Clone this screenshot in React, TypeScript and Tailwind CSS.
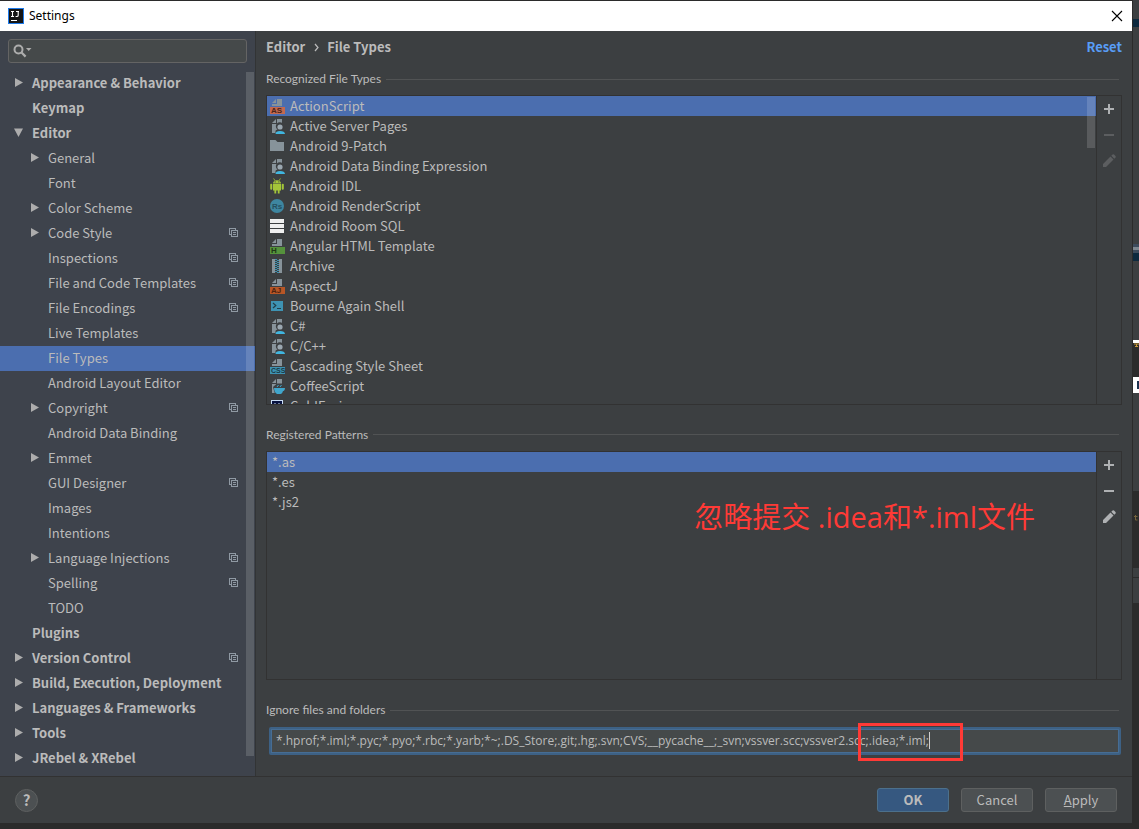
import type { ReactNode } from "react";

type Node = { label: string; level: 0 | 1; arrow?: "right" | "down"; copy?: boolean; selected?: boolean };

const tree: Node[] = [
  { label: "Appearance & Behavior", level: 0, arrow: "right" },
  { label: "Keymap", level: 0 },
  { label: "Editor", level: 0, arrow: "down" },
  { label: "General", level: 1, arrow: "right" },
  { label: "Font", level: 1 },
  { label: "Color Scheme", level: 1, arrow: "right" },
  { label: "Code Style", level: 1, arrow: "right", copy: true },
  { label: "Inspections", level: 1, copy: true },
  { label: "File and Code Templates", level: 1, copy: true },
  { label: "File Encodings", level: 1, copy: true },
  { label: "Live Templates", level: 1 },
  { label: "File Types", level: 1, selected: true },
  { label: "Android Layout Editor", level: 1 },
  { label: "Copyright", level: 1, arrow: "right", copy: true },
  { label: "Android Data Binding", level: 1 },
  { label: "Emmet", level: 1, arrow: "right" },
  { label: "GUI Designer", level: 1, copy: true },
  { label: "Images", level: 1 },
  { label: "Intentions", level: 1 },
  { label: "Language Injections", level: 1, arrow: "right", copy: true },
  { label: "Spelling", level: 1, copy: true },
  { label: "TODO", level: 1 },
  { label: "Plugins", level: 0 },
  { label: "Version Control", level: 0, arrow: "right", copy: true },
  { label: "Build, Execution, Deployment", level: 0, arrow: "right" },
  { label: "Languages & Frameworks", level: 0, arrow: "right" },
  { label: "Tools", level: 0, arrow: "right" },
  { label: "JRebel & XRebel", level: 0, arrow: "right" },
];

function Arrow({ dir }: { dir?: "right" | "down" }) {
  return (
    <svg width="9" height="9" viewBox="0 0 9 9" className="shrink-0" fill="#adadad" aria-hidden="true">
      {dir === "right" && <path d="M1 0L9 4.5L1 9Z" />}
      {dir === "down" && <path d="M0 0.5H9L4.5 9Z" />}
    </svg>
  );
}

function CopyIcon() {
  return (
    <svg width="9" height="9" viewBox="0 0 9 9" fill="none" stroke="#8f99a3" shapeRendering="crispEdges" className="shrink-0" aria-hidden="true">
      <path d="M2 6.5H0.5V0.5H6.5V2" />
      <rect x="2.5" y="2.5" width="6" height="6" />
      <path d="M4 4.5H7M4 6.5H7" />
    </svg>
  );
}

function Icon({ children }: { children: ReactNode }) {
  return (
    <svg width="16" height="16" viewBox="0 0 16 16" className="shrink-0" aria-hidden="true">
      {children}
    </svg>
  );
}

function Page() {
  return (
    <>
      <path d="M7 1L3 5H7Z" fill="#87939a" />
      <path d="M8 1H13V15H3V6H8Z" fill="#87939a" />
    </>
  );
}

function Badge({ text, color, back, ink, size = 8 }: { text: string; color: string; back: string; ink: string; size?: number }) {
  return (
    <Icon>
      <Page />
      <rect x="0" y="8" width="16" height="8" fill={back} />
      <rect x="1" y="9" width="15" height="7" fill={color} />
      <text x="2" y="15.4" fontSize={size} fontFamily="Liberation Sans, sans-serif" fontWeight="700" fill={ink}>
        {text}
      </text>
    </Icon>
  );
}

function UserFile() {
  return (
    <Icon>
      <Page />
      <path d="M5 16C5 13 7 12 8.5 11.6A4 4 0 1 1 13 11.6C15 12 16 13 16 16Z" fill="#3c3f41" />
      <path d="M3 6H6.5V15H3Z" fill="#87939a" />
      <circle cx="11" cy="9" r="2.6" fill="#9aa7b0" />
      <path d="M6.5 16C6.5 14 8 13 11 13S16 14 16 16Z" fill="#40b6e0" />
    </Icon>
  );
}

const files: { label: string; icon: ReactNode }[] = [
  { label: "ActionScript", icon: <Badge text="AS" color="#c4694f" back="#4b6eaf" ink="#4a2519" /> },
  { label: "Active Server Pages", icon: <UserFile /> },
  {
    label: "Android 9-Patch",
    icon: (
      <Icon>
        <path d="M1 2H6.5L8.5 4H15V13H1Z" fill="#87939a" />
      </Icon>
    ),
  },
  { label: "Android Data Binding Expression", icon: <UserFile /> },
  {
    label: "Android IDL",
    icon: (
      <Icon>
        <g fill="#a4c639">
          <path d="M4 5.5C4 3.5 5.5 2.2 8 2.2S12 3.5 12 5.5Z" />
          <path d="M4.6 0.4L6 2.8M11.4 0.4L10 2.8" stroke="#a4c639" strokeWidth="0.8" />
          <path d="M4 6H12V12.4H10.6V15.5H8.8V12.4H7.2V15.5H5.4V12.4H4Z" />
          <rect x="1.2" y="5.8" width="2.1" height="6" rx="1" />
          <rect x="12.7" y="5.8" width="2.1" height="6" rx="1" />
        </g>
        <rect x="5.7" y="3.4" width="1" height="1" fill="#3c3f41" />
        <rect x="9.3" y="3.4" width="1" height="1" fill="#3c3f41" />
      </Icon>
    ),
  },
  {
    label: "Android RenderScript",
    icon: (
      <Icon>
        <circle cx="8" cy="8" r="7" fill="#3e86a0" />
        <text x="3" y="11" fontSize="8" fontFamily="Liberation Sans, sans-serif" fontWeight="700" fill="#25505f">
          Rs
        </text>
      </Icon>
    ),
  },
  {
    label: "Android Room SQL",
    icon: (
      <Icon>
        <path d="M1 1H15V5H1ZM1 6H15V10H1ZM1 11H15V15H1Z" fill="#efefef" />
      </Icon>
    ),
  },
  { label: "Angular HTML Template", icon: <Badge text="H" color="#55923c" back="#3c3f41" ink="#1f3716" /> },
  {
    label: "Archive",
    icon: (
      <Icon>
        <path d="M3 1H6V15H3ZM10 1H13V15H10Z" fill="#87939a" />
        <path d="M7 1V15" stroke="#40b6e0" strokeWidth="1.4" strokeDasharray="1 1" />
        <path d="M9 2V15" stroke="#40b6e0" strokeWidth="1.4" strokeDasharray="1 1" />
      </Icon>
    ),
  },
  { label: "AspectJ", icon: <Badge text="AJ" color="#b85626" back="#3c3f41" ink="#4d2410" /> },
  {
    label: "Bourne Again Shell",
    icon: (
      <Icon>
        <rect x="2" y="3" width="12" height="10" fill="#3e93b3" />
        <path d="M4 5L6.8 7.5L4 10" fill="none" stroke="#223f4b" strokeWidth="1.2" />
        <path d="M8 10.5H12" stroke="#223f4b" />
      </Icon>
    ),
  },
  { label: "C#", icon: <UserFile /> },
  { label: "C/C++", icon: <UserFile /> },
  { label: "Cascading Style Sheet", icon: <Badge text="CSS" color="#3e93b3" back="#3c3f41" ink="#193945" size={7} /> },
  {
    label: "CoffeeScript",
    icon: (
      <Icon>
        <Page />
        <path d="M4 9L8 5.5H15V16H6Z" fill="#3c3f41" />
        <path d="M5 10H16C16 12.5 14.5 13 14 13C13.5 15 12.5 16 11.5 16H8C6 15 5 12.5 5 10Z" fill="#40a6cc" />
        <path d="M8 9L9.5 7M11 9L12.5 7" stroke="#40a6cc" />
      </Icon>
    ),
  },
  {
    label: "ColdFusion",
    icon: (
      <Icon>
        <rect x="2.5" y="2.5" width="11" height="11" fill="#07123f" stroke="#c9dcf5" />
        <path d="M7 6H5V10H7M11 6H9V10M9 8H11" fill="none" stroke="#c9dcf5" />
      </Icon>
    ),
  },
];

const patterns = ["*.as", "*.es", "*.js2"];

const uiFont = 'font-["Noto_Sans_CJK_SC",sans-serif]';
const smallFont = 'font-["Lato",sans-serif]';

function Section({ id, children, first = false }: { id: string; children: ReactNode; first?: boolean }) {
  return (
    <div className={`${smallFont} flex h-8 shrink-0 items-center gap-[5px] pr-[3px] text-[12px] ${first ? "" : "mt-[14px]"}`}>
      <label id={id} htmlFor={id === "ignore" ? "ignore-input" : undefined}>
        {children}
      </label>
      <div className="h-px flex-1 bg-[#515354]" />
    </div>
  );
}

function Tools({ editable }: { editable: boolean }) {
  const dim = editable ? "text-[#afb1b3]" : "text-[#5c5e60]";
  return (
    <div className="flex w-[25px] shrink-0 flex-col items-center gap-[10px] border-l border-[#323232] pt-[5px]">
      <button aria-label="Add" className="text-[#afb1b3]">
        <Icon>
          <path d="M7 3H9V7H13V9H9V13H7V9H3V7H7Z" fill="currentColor" />
        </Icon>
      </button>
      <button aria-label="Remove" className={dim}>
        <Icon>
          <path d="M3 7H13V9H3Z" fill="currentColor" />
        </Icon>
      </button>
      <button aria-label="Edit" className={dim}>
        <Icon>
          <path d="M2 14V11L9.5 3.5L12.5 6.5L5 14ZM10.3 2.7L11.6 1.4Q12.3 1 13 1.5L14.5 3Q15 3.7 14.6 4.4L13.3 5.7Z" fill="currentColor" />
        </Icon>
      </button>
    </div>
  );
}

function EditorEdge() {
  return (
    <div className="flex w-[7px] shrink-0 flex-col overflow-hidden border-l border-[#2b2b2b] bg-[#2b2b2b]" aria-hidden="true">
      <div className="h-[19px] shrink-0 bg-[#3c3f41]" />
      <div className="h-2 shrink-0 bg-[#0d293e]" />
      <div className="h-[217px] shrink-0 bg-[#3c3f41]" />
      <div className="flex h-[9px] shrink-0 items-center bg-[#3d4b5c]">
        <div className="h-[3px] w-full bg-[#7d8790]" />
      </div>
      <div className="h-2 shrink-0 bg-[#0d293e]" />
      <div className="h-[79px] shrink-0 bg-[#3c3f41]" />
      <div className="h-[3px] shrink-0 bg-white" />
      <svg width="6" height="34" viewBox="0 0 6 34" className="shrink-0">
        <path d="M1 1H6M3.5 1V4M2 3.5H5" stroke="#c99a3a" />
      </svg>
      <svg width="6" height="16" viewBox="0 0 6 16" className="shrink-0">
        <rect width="6" height="16" fill="#fff" />
        <rect x="4" y="4" width="2" height="8" fill="#1d3350" />
      </svg>
      <div className="h-[98px] shrink-0 bg-[#3c3f41]" />
      <svg width="6" height="77" viewBox="0 0 6 77" className="shrink-0">
        <path d="M2.5 24V29H4.5M1 25.5H4.5" stroke="#76643c" fill="none" />
      </svg>
      <div className="h-[9px] shrink-0 bg-[#3c3f41]" />
      <div className="mt-px h-[25px] shrink-0 bg-[#3c3f41]" />
    </div>
  );
}

export default function App() {
  return (
    <div className={`${uiFont} flex h-screen overflow-hidden bg-[#2b2b2b] text-[13px] leading-5 text-[#bbbbbb]`}>
      <div className="flex min-w-0 flex-1 flex-col pt-px pb-[6px]">
        <header className="flex h-[30px] shrink-0 items-center justify-between bg-white pr-2 pl-2 text-black">
          <div className="flex items-center gap-[5px]">
            <svg width="16" height="16" viewBox="0 0 16 16" aria-hidden="true">
              <rect x="0.5" y="0.5" width="15" height="15" fill="#151515" stroke="#1f7bea" />
              <path d="M3 3.5H6M4.5 3.5V8.5M3 8.5H6M8 3.5H11M10.2 3.5V7.2Q10.2 8.5 8.8 8.5H7.6" fill="none" stroke="#fff" strokeWidth="1.1" />
              <path d="M3 12.5H9" stroke="#fff" />
            </svg>
            <h1 className='font-["Noto_Sans",sans-serif] text-[12px]'>Settings</h1>
          </div>
          <button aria-label="Close">
            <svg width="14" height="14" viewBox="0 0 14 14" stroke="#000" strokeWidth="1.1">
              <path d="M2 2L12 12M12 2L2 12" />
            </svg>
          </button>
        </header>

        <div className="flex min-h-0 flex-1">
          <nav className="flex w-[256px] shrink-0 flex-col border-r border-[#323435] bg-[#3e434c]">
            <div className="mx-2 mt-2 flex h-6 shrink-0 items-center rounded-[3px] border border-[#646464] bg-[#45494a] pl-1">
              <svg width="19" height="14" viewBox="0 0 19 14" aria-hidden="true">
                <circle cx="5.5" cy="5.5" r="4" fill="none" stroke="#adadad" strokeWidth="2" />
                <path d="M8.3 8.3L12.6 12.6" stroke="#adadad" strokeWidth="2.2" />
                <path d="M13 4H18.5L15.7 7Z" fill="#adadad" />
              </svg>
              <input aria-label="Search settings" className="min-w-0 flex-1 bg-transparent outline-none" />
            </div>
            <div className="relative mt-2 min-h-0 flex-1 overflow-hidden">
              <ul>
                {tree.map((n) => (
                  <li key={n.label}>
                    <button
                      className={`flex h-[25px] w-full items-center gap-[9px] pr-[17px] pb-[2px] text-left ${n.level ? "pl-[30px]" : "pl-[14px] font-bold"} ${n.selected ? "bg-[#4b6eaf]" : ""}`}
                    >
                      <Arrow dir={n.arrow} />
                      <span className="flex-1 whitespace-nowrap">{n.label}</span>
                      {n.copy && <CopyIcon />}
                    </button>
                  </li>
                ))}
              </ul>
              <div className="absolute top-px right-px bottom-5 w-2 bg-white/15" />
            </div>
          </nav>

          <main className="flex min-w-0 flex-1 flex-col bg-[#3c3f41] pr-[10px] pl-[10px]">
            <div className="flex h-8 shrink-0 items-center justify-between font-bold">
              <div className="flex items-center">
                <span>Editor</span>
                <svg width="22" height="9" viewBox="0 0 22 9" fill="none" stroke="#bbbbbb" strokeWidth="1.2" aria-hidden="true">
                  <path d="M10 1L13 4.5L10 8" />
                </svg>
                <span>File Types</span>
              </div>
              <a href="#reset" className="text-[#589df6]">
                Reset
              </a>
            </div>

            <Section id="types" first>
              Recognized File Types
            </Section>
            <div className="flex min-h-0 flex-[310] basis-0 border border-[#323232]">
              <div className="relative min-w-0 flex-1 overflow-hidden">
                <ul aria-labelledby="types">
                  {files.map((f, i) => (
                    <li key={f.label}>
                      <button className={`flex h-5 w-full items-center gap-[5px] pl-[2px] text-left ${i === 0 ? "bg-[#4b6eaf]" : ""}`}>
                        {f.icon}
                        <span>{f.label}</span>
                      </button>
                    </li>
                  ))}
                </ul>
                <div className="absolute top-px right-px h-[51px] w-2 bg-white/15" />
              </div>
              <Tools editable={false} />
            </div>

            <Section id="patterns">Registered Patterns</Section>
            <div className="flex min-h-0 flex-[229] basis-0 border border-[#323232]">
              <div className="relative min-w-0 flex-1">
                <ul aria-labelledby="patterns">
                  {patterns.map((p, i) => (
                    <li key={p}>
                      <button className={`flex h-5 w-full items-center pl-[5px] text-left ${i === 0 ? "bg-[#4b6eaf]" : ""}`}>{p}</button>
                    </li>
                  ))}
                </ul>
                <p className='absolute top-[45px] right-[61px] font-["Open_Sans","Noto_Sans_CJK_SC",sans-serif] text-[29px] leading-10 whitespace-nowrap text-[#ff3a36]'>
                  忽略提交 .idea和*.iml文件
                </p>
              </div>
              <Tools editable />
            </div>

            <Section id="ignore">Ignore files and folders</Section>
            <div className="relative mt-px mr-px mb-[21px] ml-[3px] shrink-0">
              <input
                id="ignore-input"
                className='block h-7 w-full rounded-[2px] border-2 border-[#3d6185] bg-[#45494a] px-[5px] pb-[2px] font-["Open_Sans",sans-serif] text-[12px] text-[#bbbbbb] ring-1 ring-[#466d94] outline-none ring-inset'
                defaultValue="*.hprof;*.iml;*.pyc;*.pyo;*.rbc;*.yarb;*~;.DS_Store;.git;.hg;.svn;CVS;__pycache__;_svn;vssver.scc;vssver2.scc;.idea;*.iml;"
              />
              <div className="absolute top-[5px] left-[660px] h-[17px] w-px bg-[#d0d0d0]" />
              <div className="absolute -top-1 left-[589px] h-[38px] w-[105px] border-[3px] border-[#ff3a36]" />
            </div>
          </main>
        </div>

        <footer className="flex h-[47px] shrink-0 items-center justify-between border-t border-[#323232] bg-[#3c3f41] pr-[15px] pl-[15px]">
          <button aria-label="Help" className="flex size-[23px] items-center justify-center rounded-full border border-[#5e6060] bg-[#4c5052] text-[15px] font-bold">
            ?
          </button>
          <div className="flex gap-3">
            <button className="h-6 w-[72px] rounded-[3px] border border-[#4c708c] bg-[#365880] font-bold">OK</button>
            <button className="h-6 w-[72px] rounded-[3px] border border-[#5e6060] bg-[#4c5052]">Cancel</button>
            <button className="h-6 w-[72px] rounded-[3px] border border-[#5e6060] bg-[#4c5052]">
              <span className="underline">A</span>pply
            </button>
          </div>
        </footer>
      </div>
      <EditorEdge />
    </div>
  );
}
